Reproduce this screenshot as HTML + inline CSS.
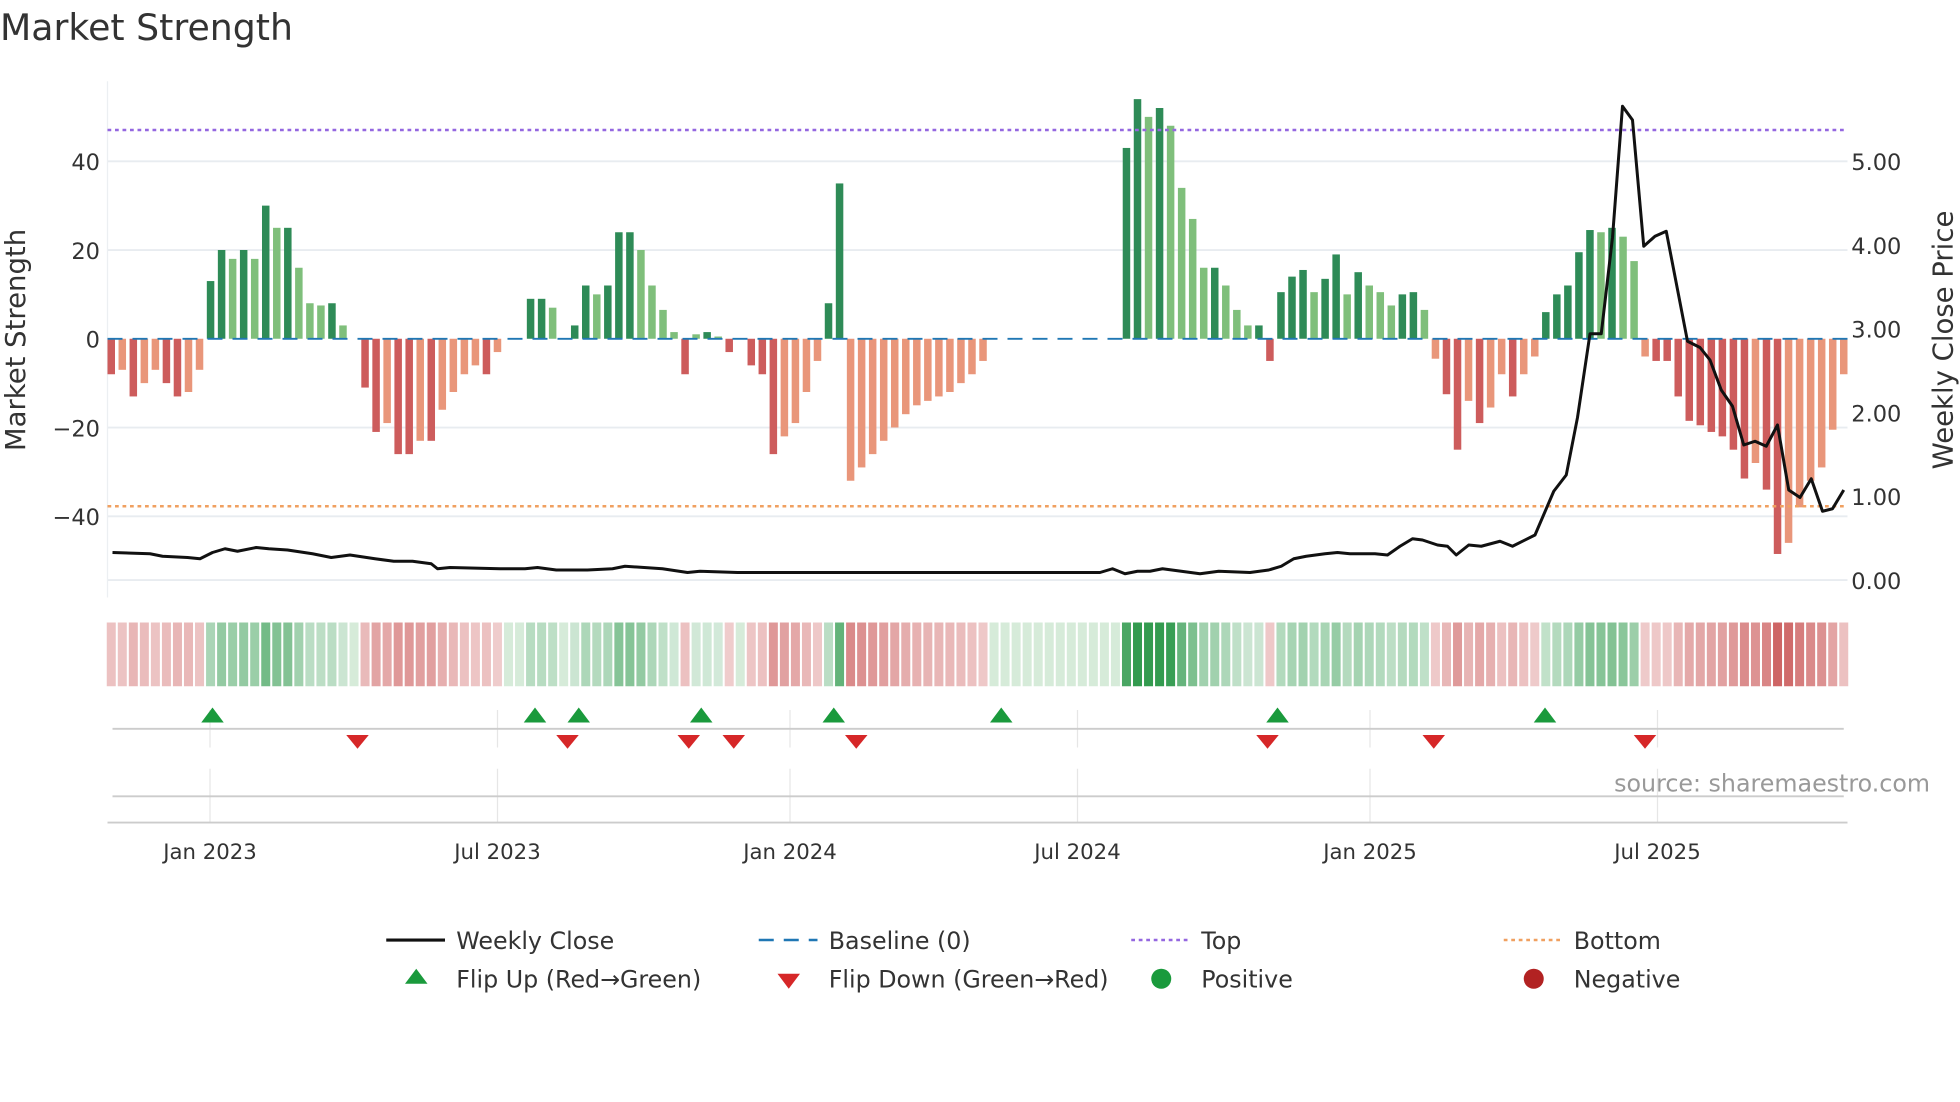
<!DOCTYPE html>
<html><head><meta charset="utf-8"><style>
html,body{margin:0;padding:0;background:#fff;}
svg{display:block;font-family:"DejaVu Sans","Liberation Sans",sans-serif;}
</style></head><body>
<svg id="s" width="1960" height="1102" viewBox="0 0 1568 881.6" xmlns="http://www.w3.org/2000/svg">
<rect width="1568" height="882" fill="#fff"/>
<text x="0" y="32" font-size="29" fill="#333">Market Strength</text>
<g stroke="#e8ecf0" stroke-width="1.5">
<line x1="86" y1="129" x2="1478" y2="129"/><line x1="86" y1="200" x2="1478" y2="200"/>
<line x1="86" y1="342" x2="1478" y2="342"/><line x1="86" y1="413" x2="1478" y2="413"/>
<line x1="86" y1="464" x2="1478" y2="464"/>
</g>
<line x1="86" y1="65" x2="86" y2="478" stroke="#eceff2" stroke-width="1"/>
<g font-size="18" fill="#333" text-anchor="end">
<text x="80" y="136">40</text><text x="80" y="207">20</text><text x="80" y="278">0</text>
<text x="80" y="349">−20</text><text x="80" y="420">−40</text>
</g>
<g font-size="18" fill="#333">
<text x="1481" y="136">5.00</text><text x="1481" y="203">4.00</text><text x="1481" y="270">3.00</text>
<text x="1481" y="337">2.00</text><text x="1481" y="404">1.00</text><text x="1481" y="471">0.00</text>
</g>
<text transform="translate(20,272) rotate(-90)" font-size="22" fill="#333" text-anchor="middle">Market Strength</text>
<text transform="translate(1562,272) rotate(-90)" font-size="22" fill="#333" text-anchor="middle">Weekly Close Price</text>
<g id="bars"></g>
<line x1="86" y1="271" x2="1478" y2="271" stroke="#1f77b4" stroke-width="1.5" stroke-dasharray="12,8"/>
<line x1="86" y1="104" x2="1478" y2="104" stroke="#9467e0" stroke-width="2" stroke-dasharray="3,3"/>
<line x1="86" y1="405" x2="1478" y2="405" stroke="#f0a060" stroke-width="2" stroke-dasharray="3,3"/>
<polyline id="price" fill="none" stroke="#111" stroke-width="2.4" stroke-linejoin="round"/>
<g id="heat"></g>
<g stroke="#e6e6e6" stroke-width="1">
<line x1="168" y1="568" x2="168" y2="598"/><line x1="398" y1="568" x2="398" y2="598"/><line x1="632" y1="568" x2="632" y2="598"/><line x1="862" y1="568" x2="862" y2="598"/><line x1="1096" y1="568" x2="1096" y2="598"/><line x1="1326" y1="568" x2="1326" y2="598"/>
<line x1="168" y1="615" x2="168" y2="658"/><line x1="398" y1="615" x2="398" y2="658"/><line x1="632" y1="615" x2="632" y2="658"/><line x1="862" y1="615" x2="862" y2="658"/><line x1="1096" y1="615" x2="1096" y2="658"/><line x1="1326" y1="615" x2="1326" y2="658"/>
</g>
<line x1="90" y1="583" x2="1475" y2="583" stroke="#ccc" stroke-width="1.5"/>
<line x1="90" y1="637" x2="1475" y2="637" stroke="#ccc" stroke-width="1.5"/>
<g id="flips"></g>
<text x="1544" y="633" font-size="19" fill="#999" text-anchor="end">source: sharemaestro.com</text>
<line x1="86" y1="658" x2="1478" y2="658" stroke="#ccc" stroke-width="1.5"/>
<g font-size="17" fill="#333" text-anchor="middle">
<text x="168" y="687">Jan 2023</text><text x="398" y="687">Jul 2023</text><text x="632" y="687">Jan 2024</text>
<text x="862" y="687">Jul 2024</text><text x="1096" y="687">Jan 2025</text><text x="1326" y="687">Jul 2025</text>
</g>
<g font-size="19" fill="#333">
<line x1="309" y1="752" x2="356" y2="752" stroke="#111" stroke-width="2.5"/><text x="365" y="759">Weekly Close</text>
<line x1="607" y1="752" x2="654" y2="752" stroke="#1f77b4" stroke-width="2" stroke-dasharray="12,8"/><text x="663" y="759">Baseline (0)</text>
<line x1="905" y1="752" x2="952" y2="752" stroke="#9467e0" stroke-width="2" stroke-dasharray="3,3"/><text x="961" y="759">Top</text>
<line x1="1203" y1="752" x2="1250" y2="752" stroke="#f0a060" stroke-width="2" stroke-dasharray="3,3"/><text x="1259" y="759">Bottom</text>
<polygon points="333,775 324,787 342,787" fill="#1a9a3c"/><text x="365" y="790">Flip Up (Red→Green)</text>
<polygon points="622,779 640,779 631,791" fill="#d62728"/><text x="663" y="790">Flip Down (Green→Red)</text>
<circle cx="929" cy="783" r="8" fill="#1a9a3c"/><text x="961" y="790">Positive</text>
<circle cx="1227" cy="783" r="8" fill="#b22222"/><text x="1259" y="790">Negative</text>
</g>
</svg>
<script>
var v=[-8,-7,-13,-10,-7,-10,-13,-12,-7,13,20,18,20,18,30,25,25,16,8,7.5,8,3,0,-11,-21,-19,-26,-26,-23,-23,-16,-12,-8,-6,-8,-3,0,0,9,9,7,0,3,12,10,12,24,24,20,12,6.5,1.5,-8,1,1.5,0.5,-3,0,-6,-8,-26,-22,-19,-12,-5,8,35,-32,-29,-26,-23,-20,-17,-15,-14,-13,-12,-10,-8,-5,0,0,0,0,0,0,0,0,0,0,0,0,43,54,50,52,48,34,27,16,16,12,6.5,3,3,-5,10.5,14,15.5,10.5,13.5,19,10,15,12,10.5,7.5,10,10.5,6.5,-4.5,-12.5,-25,-14,-19,-15.5,-8,-13,-8,-4,6,10,12,19.5,24.5,24,25,23,17.5,-4,-5,-5,-13,-18.5,-19.5,-21,-22,-25,-31.5,-28,-34,-48.5,-46,-38,-32,-29,-20.5,-8];
var n=v.length,x0=89,dx=(1475-89)/(n-1),ns="http://www.w3.org/2000/svg";
var bars=document.getElementById('bars'),heat=document.getElementById('heat');
function el(t,a,p){var e=document.createElementNS(ns,t);for(var k in a)e.setAttribute(k,a[k]);p.appendChild(e);}
for(var i=0;i<n;i++){var x=x0+i*dx,a=v[i],p=i?Math.abs(v[i-1]):0,dark=Math.abs(a)>=p;
 if(a!==0){var h=Math.abs(a)*3.55;var c=a>0?(dark?'#2e8b57':'#7fbf7b'):(dark?'#cd5c5c':'#e9967a');
 el('rect',{x:x-3,y:a>0?271-h:271,width:6,height:h,fill:c},bars);}
 var m=Math.min(Math.abs(a)/50,1),col;
 if(a>0){col='rgba(40,150,70,'+(0.2+0.75*m)+')';}else if(a<0){col='rgba(200,80,80,'+(0.25+0.65*m)+')';}else col='rgba(120,190,130,0.3)';
 el('rect',{x:x-3.6,y:498,width:7.2,height:51,fill:col},heat);}
var pts=[[90,442],[120,443],[130,445],[150,446],[160,447],[170,442],[180,439],[190,441],[205,438],[215,439],[230,440],[250,443],[265,446],[280,444],[300,447],[315,449],[330,449],[345,451],[350,455],[360,454],[400,455],[420,455],[430,454],[445,456],[460,456],[470,456],[490,455],[500,453],[530,455],[550,458],[560,457],[590,458],[880,458],[890,455],[900,459],[910,457],[920,457],[930,455],[945,457],[960,459],[975,457],[1000,458],[1015,456],[1025,453],[1035,447],[1045,445],[1060,443],[1070,442],[1080,443],[1090,443],[1100,443],[1110,444],[1120,437],[1130,431],[1138,432],[1150,436],[1158,437],[1165,444],[1175,436],[1185,437],[1200,433],[1210,437],[1228,428],[1243,393],[1253,380],[1262,334],[1272,267],[1281,267],[1290,190],[1298,85],[1306,96],[1315,197],[1324,189],[1333,185],[1350,273],[1360,278],[1368,288],[1377,312],[1386,325],[1395,356],[1404,353],[1413,357],[1422,340],[1431,392],[1440,398],[1449,383],[1458,409],[1466,407],[1475,392]];
document.getElementById('price').setAttribute('points',pts.map(function(p){return p.join(',')}).join(' '));
var f=document.getElementById('flips');
[170,428,463,561,667,801,1022,1236].forEach(function(x){el('polygon',{points:(x)+',566 '+(x-9)+',578 '+(x+9)+',578',fill:'#1a9a3c'},f);});
[286,454,551,587,685,1014,1147,1316].forEach(function(x){el('polygon',{points:(x-9)+',588 '+(x+9)+',588 '+x+',599',fill:'#d62728'},f);});
</script>
</body></html>
